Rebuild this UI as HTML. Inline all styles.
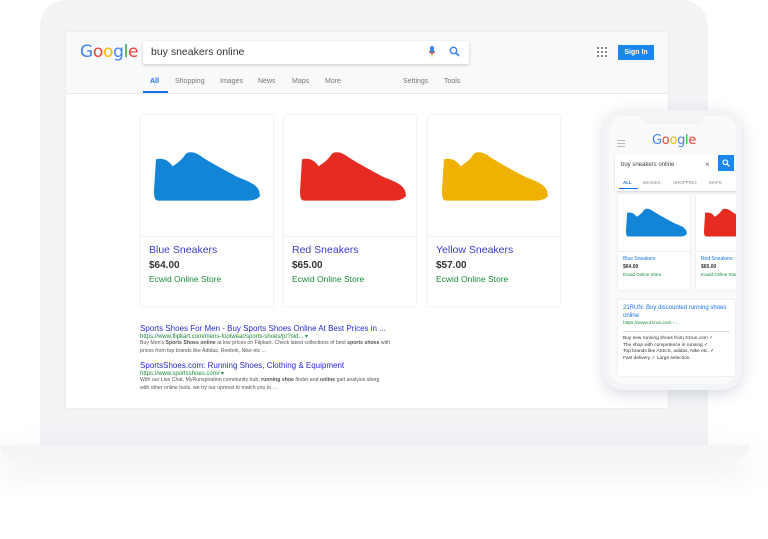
<!DOCTYPE html>
<html><head><meta charset="utf-8"><style>
*{margin:0;padding:0;box-sizing:border-box}
body{width:768px;height:539px;background:#fff;position:relative;overflow:hidden;font-family:"Liberation Sans",Arial,sans-serif}
.abs{position:absolute}
.laptop{left:40px;top:0;width:668px;height:450px;background:#f2f3f5;border-radius:26px 26px 0 0}
.screen{left:66px;top:32px;width:602px;height:376px;background:#fff;box-shadow:0 0 2px rgba(0,0,0,.08)}
.hdr{left:0;top:0;width:602px;height:62px;background:#f8f9fa;border-bottom:1px solid #e8e8e8}
.base{left:0;top:445px;width:750px;height:13px;background:#f4f5f7;border-radius:0 0 14px 14px;box-shadow:0 12px 30px rgba(120,130,160,.22)}
.g{font-size:17px;font-weight:normal;letter-spacing:-0.3px;font-family:"DejaVu Sans","Liberation Sans",sans-serif}
.search{left:77px;top:9px;width:326px;height:23px;background:#fff;box-shadow:0 1px 3px rgba(0,0,0,.2);border-radius:2px;font-size:10.5px;color:#333;padding:5px 8px}
.tab{font-size:7px;color:#777;top:46px}
.card{width:132px;height:191px;background:#fff;box-shadow:0 0 2px rgba(0,0,0,.15);top:83px}
.card .img{height:122px;border-bottom:1px solid #eee;position:relative}
.card .t{font-size:10.5px;color:#3a3ad0;margin:7px 0 0 8px}
.card .p{font-size:10px;font-weight:bold;color:#333;margin:4px 0 0 8px}
.card .s{font-size:8.5px;color:#1a8a3a;margin:3px 0 0 8px}
.rt{font-size:8px;color:#2a2ad0}
.ru{font-size:6px;color:#1a8a3a}
.rd{font-size:5.2px;color:#555;line-height:7.5px}
.phone{left:603px;top:110px;width:139px;height:280px;background:#f3f4f6;border-radius:20px;box-shadow:0 4px 14px rgba(100,110,140,.25)}
.pscreen{left:6px;top:6px;width:127px;height:268px;background:#fafafa;border-radius:15px;overflow:hidden}
</style></head><body>
<svg width="0" height="0" style="position:absolute"><defs><path id="shoe" d="M2,8 C9,6 15,9 19,15 C24,12 29,8 32,3 C34,0 40,0 45,3 C55,10 70,18 85,26 C95,30 104,33 107,40 L108,45 C106,49 100,50 95,50 L4,50 C1,50 0,47 0,40 Z"/></defs></svg>
<div class="abs laptop"></div>
<div class="abs base"></div>
<div class="abs screen">
 <div class="abs hdr"></div>
 <div class="abs g" style="left:14px;top:10px"><span style="color:#4285f4">G</span><span style="color:#ea4335">o</span><span style="color:#fbbc05">o</span><span style="color:#4285f4">g</span><span style="color:#34a853">l</span><span style="color:#ea4335">e</span></div>
 <div class="abs search">buy sneakers online
  <svg class="abs" style="left:285px;top:5px" width="8" height="12" viewBox="0 0 8 12"><rect x="2" y="0" width="4" height="7" rx="2" fill="#4285f4"/><path d="M1 5 Q4 10 7 5" stroke="#ea4335" fill="none"/><rect x="3.5" y="8" width="1" height="3" fill="#fbbc05"/></svg>
  <svg class="abs" style="left:306px;top:5px" width="11" height="11" viewBox="0 0 11 11"><circle cx="4.5" cy="4.5" r="3.2" stroke="#4285f4" stroke-width="1.5" fill="none"/><path d="M7 7 L10 10" stroke="#4285f4" stroke-width="1.8"/></svg>
 </div>
 <svg class="abs" style="left:531px;top:15px" width="10" height="10"><g fill="#888"><rect x="0" y="0" width="2" height="2"/><rect x="4" y="0" width="2" height="2"/><rect x="8" y="0" width="2" height="2"/><rect x="0" y="4" width="2" height="2"/><rect x="4" y="4" width="2" height="2"/><rect x="8" y="4" width="2" height="2"/><rect x="0" y="8" width="2" height="2"/><rect x="4" y="8" width="2" height="2"/><rect x="8" y="8" width="2" height="2"/></g></svg>
 <div class="abs" style="left:552px;top:13px;width:36px;height:15px;background:#1a87ee;color:#fff;font-size:7px;font-weight:bold;text-align:center;line-height:15px;border-radius:1px">Sign In</div>
 <div class="abs tab" style="left:84px;color:#1a73e8;font-weight:bold">All</div>
 <div class="abs" style="left:77px;top:59px;width:25px;height:2px;background:#1a73e8"></div>
 <div class="abs tab" style="left:109px">Shopping</div>
 <div class="abs tab" style="left:154px">Images</div>
 <div class="abs tab" style="left:192px">News</div>
 <div class="abs tab" style="left:226px">Maps</div>
 <div class="abs tab" style="left:259px">More</div>
 <div class="abs tab" style="left:337px">Settings</div>
 <div class="abs tab" style="left:378px">Tools</div>
 <div class="abs card" style="left:75px"><div class="img"><svg class="abs" style="left:13px;top:36px" width="108" height="52" viewBox="0 0 110 52"><use href="#shoe" fill="#1285d6"/></svg></div><div class="t">Blue Sneakers</div><div class="p">$64.00</div><div class="s">Ecwid Online Store</div></div>
 <div class="abs card" style="left:218px"><div class="img"><svg class="abs" style="left:16px;top:36px" width="108" height="52" viewBox="0 0 110 52"><use href="#shoe" fill="#e52b22"/></svg></div><div class="t">Red Sneakers</div><div class="p">$65.00</div><div class="s">Ecwid Online Store</div></div>
 <div class="abs card" style="left:362px"><div class="img"><svg class="abs" style="left:14px;top:36px" width="108" height="52" viewBox="0 0 110 52"><use href="#shoe" fill="#efb200"/></svg></div><div class="t">Yellow Sneakers</div><div class="p">$57.00</div><div class="s">Ecwid Online Store</div></div>
 <div class="abs" style="left:74px;top:292px;width:264px">
  <div class="rt">Sports Shoes For Men - Buy Sports Shoes Online At Best Prices in ...</div>
  <div class="ru">https://www.flipkart.com/mens-footwear/sports-shoes/pr?sid... ▾</div>
  <div class="rd">Buy Men's <b>Sports Shoes online</b> at low prices on Flipkart. Check latest collections of best <b>sports shoes</b> with prices from top brands like Adidas, Reebok, Nike etc ...</div>
  <div class="rt" style="margin-top:6px">SportsShoes.com: Running Shoes, Clothing &amp; Equipment</div>
  <div class="ru">https://www.sportsshoes.com/ ▾</div>
  <div class="rd" style="white-space:nowrap;overflow:hidden;width:258px">With our Live Chat, MyRunspiration community hub, <b>running shoe</b> finder and <b>online</b> gait analysis along<br>with other online tools, we try our upmost to match you to ...</div>
 </div>
</div>
<div class="abs phone"><div class="abs pscreen">
 <div class="abs" style="left:32px;top:0;width:63px;height:8px;background:#f3f4f6;border-radius:0 0 7px 7px"></div>
 <div class="abs" style="left:8px;top:24px;width:8px;height:1px;background:#bbb;box-shadow:0 3px 0 #bbb,0 6px 0 #bbb"></div>
 <div class="abs g" style="left:43px;top:17px;font-size:13px"><span style="color:#4285f4">G</span><span style="color:#ea4335">o</span><span style="color:#fbbc05">o</span><span style="color:#4285f4">g</span><span style="color:#34a853">l</span><span style="color:#ea4335">e</span></div>
 <div class="abs" style="left:6px;top:39px;width:122px;height:36px;background:#fff;box-shadow:0 1px 2px rgba(0,0,0,.15)"></div>
 <div class="abs" style="left:12px;top:46px;font-size:6px;color:#444">buy sneakers online</div>
 <div class="abs" style="left:96px;top:44px;font-size:8px;color:#666">×</div>
 <div class="abs" style="left:109px;top:39px;width:16px;height:16px;background:#1a87ee"><svg style="margin:4px" width="8" height="8" viewBox="0 0 11 11"><circle cx="4.5" cy="4.5" r="3.2" stroke="#fff" stroke-width="1.6" fill="none"/><path d="M7 7 L10 10" stroke="#fff" stroke-width="1.8"/></svg></div>
 <div class="abs" style="left:14px;top:64px;font-size:4.5px;color:#1a73e8;font-weight:bold">ALL</div>
 <div class="abs" style="left:10px;top:72px;width:19px;height:1px;background:#1a73e8"></div>
 <div class="abs" style="left:34px;top:64px;font-size:4.5px;color:#888">IMAGES</div>
 <div class="abs" style="left:64px;top:64px;font-size:4.5px;color:#888">SHOPPING</div>
 <div class="abs" style="left:100px;top:64px;font-size:4.5px;color:#888">MAPS</div>
 <div class="abs" style="left:9px;top:78px;width:72px;height:96px;background:#fff;box-shadow:0 0 2px rgba(0,0,0,.12)">
  <svg class="abs" style="left:8px;top:14px" width="62" height="30" viewBox="0 0 110 52"><use href="#shoe" fill="#1285d6"/></svg>
  <div class="abs" style="left:0;top:57px;width:72px;border-top:1px solid #eee"></div>
  <div class="abs" style="left:5px;top:62px;font-size:5px;color:#1a73e8">Blue Sneakers</div>
  <div class="abs" style="left:5px;top:70px;font-size:5px;color:#333;font-weight:bold">$64.00</div>
  <div class="abs" style="left:5px;top:78px;font-size:4.5px;color:#1a8a3a">Ecwid Online Store</div>
 </div>
 <div class="abs" style="left:87px;top:78px;width:72px;height:96px;background:#fff;box-shadow:0 0 2px rgba(0,0,0,.12)">
  <svg class="abs" style="left:8px;top:14px" width="62" height="30" viewBox="0 0 110 52"><use href="#shoe" fill="#e52b22"/></svg>
  <div class="abs" style="left:0;top:57px;width:72px;border-top:1px solid #eee"></div>
  <div class="abs" style="left:5px;top:62px;font-size:5px;color:#1a73e8">Red Sneakers</div>
  <div class="abs" style="left:5px;top:70px;font-size:5px;color:#333;font-weight:bold">$65.00</div>
  <div class="abs" style="left:5px;top:78px;font-size:4.5px;color:#1a8a3a">Ecwid Online Store</div>
 </div>
 <div class="abs" style="left:9px;top:184px;width:117px;height:76px;background:#fff;box-shadow:0 0 2px rgba(0,0,0,.12);padding:5px">
  <div style="font-size:6px;color:#1a73e8;line-height:7.5px">21RUN: Buy discounted running shoes online</div>
  <div style="font-size:4.8px;color:#1a8a3a;margin-top:1px">https://www.21run.com › ...</div>
  <div style="border-top:1px solid #ddd;margin:5px 0 4px"></div>
  <div style="font-size:4.8px;color:#333;line-height:6.5px">Buy new running shoes from 21run.com ✓<br>The shop with competence in running ✓<br>Top brands like ASICS, adidas, Nike etc. ✓<br>Fast delivery ✓ Large selection.</div>
 </div>
</div></div>
</body></html>
